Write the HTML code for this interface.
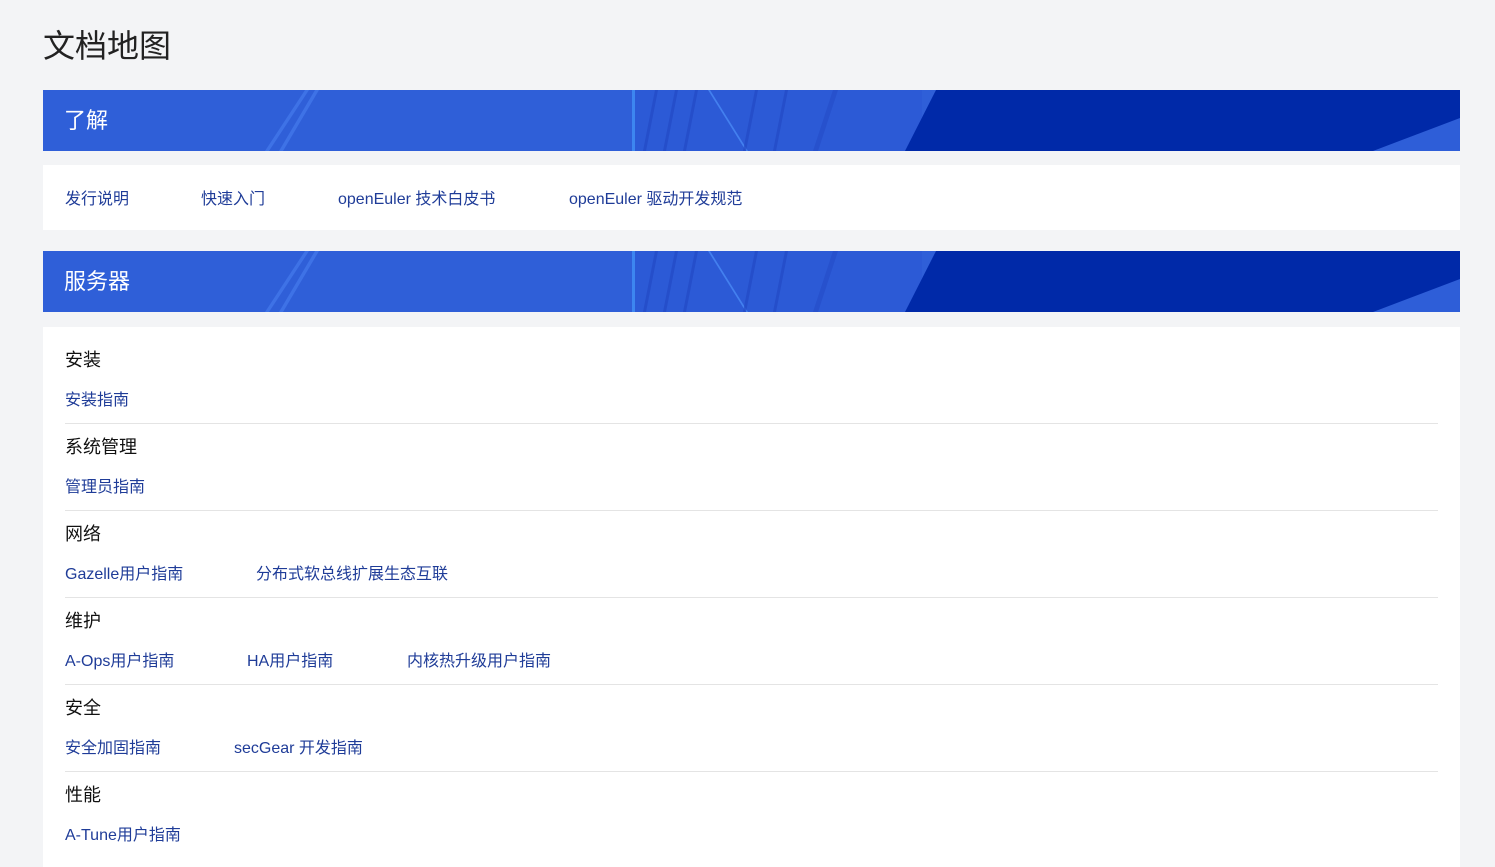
<!DOCTYPE html>
<html><head><meta charset="utf-8"><style>
*{margin:0;padding:0;box-sizing:border-box}
body{width:1495px;height:857px;overflow:hidden;background:#f3f4f6;font-family:"Liberation Sans","Noto Sans CJK SC",sans-serif}
h1{position:absolute;left:43px;top:26px;font-size:32px;font-weight:400;color:#222;line-height:40px}
.ban{position:absolute;left:43px;width:1417px;height:61px;overflow:hidden}
.ban svg{position:absolute;left:0;top:0}
.ban span{position:absolute;left:21px;top:0;line-height:61px;font-size:22px;color:#fff}
.card{position:absolute;left:43px;width:1417px;background:#fff}
a{color:#1f3c98;text-decoration:none;font-size:16px}
.r1 a{position:absolute;top:2px;line-height:65px}
.row{margin:0 22px;height:87px;border-bottom:1px solid #e4e4e4;position:relative}
.row h3{position:absolute;top:10px;font-size:18px;font-weight:400;color:#111;line-height:26px}
.row a{position:absolute;top:54px;line-height:20px}
</style></head><body>
<h1>文档地图</h1>
<svg width="0" height="0" style="position:absolute"><defs>
<g id="bg">
<rect width="1417" height="61" fill="#2f5fd8"/>
<rect x="589" width="290" height="61" fill="#2c5ad6"/>
<polygon points="222,61 262,0 266,0 226,61" fill="#4a7ef0" opacity=".6"/>
<polygon points="236,61 272,0 276,0 240,61" fill="#4a7ef0" opacity=".6"/>
<rect x="589" width="3" height="61" fill="#3d86f0"/>
<polygon points="600,61 612,0 615,0 603,61" fill="#2248c4" opacity=".7"/>
<polygon points="620,61 632,0 635,0 623,61" fill="#2248c4" opacity=".7"/>
<polygon points="640,61 652,0 655,0 643,61" fill="#2248c4" opacity=".7"/>
<polygon points="665,0 667,0 705,61 703,61" fill="#4a8af5" opacity=".8"/>
<polygon points="700,61 712,0 715,0 703,61" fill="#2248c4" opacity=".7"/>
<polygon points="730,61 742,0 745,0 733,61" fill="#2248c4" opacity=".7"/>
<polygon points="770,61 790,0 795,0 775,61" fill="#2248c4" opacity=".5"/>
<polygon points="862,61 893,0 1417,0 1417,61" fill="#0029a8"/>
<polygon points="1330,61 1417,28 1417,61" fill="#2e5ed8"/>
</g></defs></svg>
<div class="ban" style="top:90px"><svg width="1417" height="61"><use href="#bg"/></svg><span>了解</span></div>
<div class="card r1" style="top:165px;height:65px">
<a style="left:22px">发行说明</a><a style="left:158px">快速入门</a><a style="left:295px">openEuler 技术白皮书</a><a style="left:526px">openEuler 驱动开发规范</a>
</div>
<div class="ban" style="top:251px"><svg width="1417" height="61"><use href="#bg"/></svg><span>服务器</span></div>
<div class="card" style="top:327px;height:540px;padding-top:10px">
<div class="row"><h3>安装</h3><a style="left:0">安装指南</a></div>
<div class="row"><h3>系统管理</h3><a style="left:0">管理员指南</a></div>
<div class="row"><h3>网络</h3><a style="left:0">Gazelle用户指南</a><a style="left:191px">分布式软总线扩展生态互联</a></div>
<div class="row"><h3>维护</h3><a style="left:0">A-Ops用户指南</a><a style="left:182px">HA用户指南</a><a style="left:342px">内核热升级用户指南</a></div>
<div class="row"><h3>安全</h3><a style="left:0">安全加固指南</a><a style="left:169px">secGear 开发指南</a></div>
<div class="row" style="border:none"><h3>性能</h3><a style="left:0">A-Tune用户指南</a></div>
</div>
</body></html>
